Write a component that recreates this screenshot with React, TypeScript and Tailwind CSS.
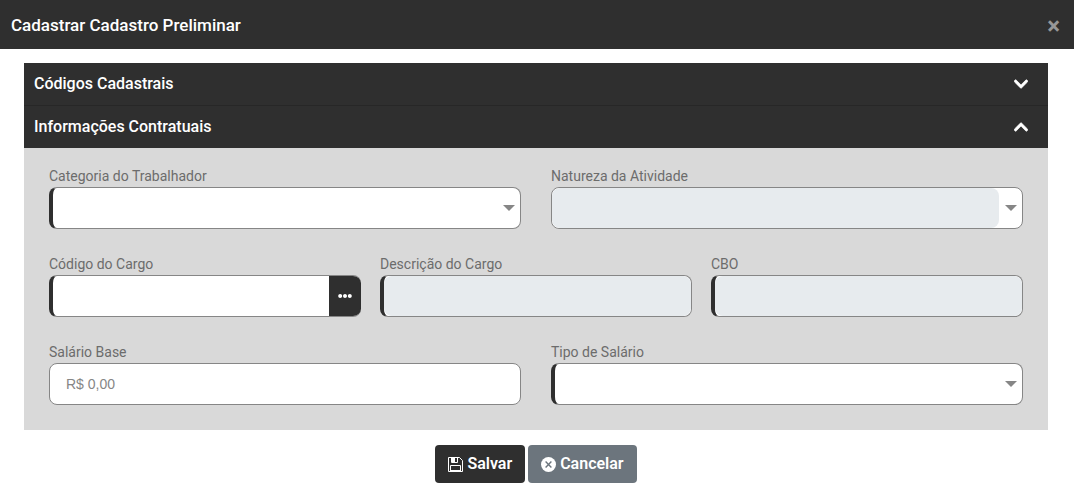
import React, { useState } from 'react';
import { clsx } from 'clsx';
import { FaChevronDown, FaChevronUp, FaEllipsisH } from 'react-icons/fa';

const SaveIcon = () => (
  <svg viewBox="0 0 15 15" className="h-[15px] w-[15px]" fill="none" stroke="currentColor" aria-hidden="true">
    <path d="M0.5 0.5h11l3 3v11h-14z" />
    <path d="M3.5 0.5v5h6v-5" />
    <path d="M3 0h4v5H3z" fill="currentColor" stroke="none" />
    <path d="M2.5 14v-5.5h10v5.5" />
    <path d="M3 13.5h9" />
  </svg>
);

const CancelIcon = () => (
  <svg viewBox="0 0 15 15" className="h-[15px] w-[15px]" aria-hidden="true">
    <circle cx="7.5" cy="7.5" r="7.5" fill="currentColor" />
    <path d="M4.6 4.6l5.8 5.8M10.4 4.6l-5.8 5.8" stroke="#6c757d" strokeWidth="1.4" />
  </svg>
);

type FieldProps = {
  id: string;
  label: string;
  required?: boolean;
  disabled?: boolean;
};

const boxClass = (required?: boolean) =>
  clsx(
    'relative flex h-[42px] overflow-hidden rounded-lg border border-[#868686] bg-white',
    required && 'border-l-4 border-l-[#2f2f2f]'
  );

const Label = ({ id, label }: { id: string; label: string }) => (
  <label htmlFor={id} className="block text-sm leading-[21px] text-[#6c6c6c]">
    {label}
  </label>
);

const SelectField = ({ id, label, required, disabled }: FieldProps) => (
  <div>
    <Label id={id} label={label} />
    <div className={clsx(boxClass(required), disabled && 'pr-[23px]')}>
      <select
        id={id}
        disabled={disabled}
        className="w-full appearance-none rounded-lg pl-4 pr-6 text-sm text-[#6c6c6c] outline-none disabled:bg-[#e7ebee] disabled:opacity-100"
      >
        <option value=""></option>
      </select>
      <svg viewBox="0 0 12 6" className="pointer-events-none absolute right-[5px] top-[17px] h-[6px] w-3 text-[#868686]" aria-hidden="true">
        <path d="M0 0h12L6 6z" fill="currentColor" />
      </svg>
    </div>
  </div>
);

const InputField = ({ id, label, required, disabled, placeholder, children }: FieldProps & { placeholder?: string; children?: React.ReactNode }) => (
  <div>
    <Label id={id} label={label} />
    <div className={clsx(boxClass(required), children && 'border-r-0')}>
      <input
        id={id}
        type="text"
        disabled={disabled}
        placeholder={placeholder}
        className="min-w-0 flex-1 rounded-lg px-4 font-['Liberation_Sans',sans-serif] text-sm text-[#6c6c6c] outline-none placeholder:text-[#868686] disabled:bg-[#e7ebee]"
      />
      {children}
    </div>
  </div>
);

const SectionHeader = ({ title, open, onClick }: { title: string; open: boolean; onClick: () => void }) => (
  <button
    type="button"
    aria-expanded={open}
    onClick={onClick}
    className="flex h-[42px] w-full items-center justify-between bg-[#2f2f2f] pl-[10px] pr-5 text-base font-medium text-white"
  >
    {title}
    {open ? <FaChevronUp className="h-4 w-[14px]" stroke="currentColor" strokeWidth="24" /> : <FaChevronDown className="h-4 w-[14px]" stroke="currentColor" strokeWidth="24" />}
  </button>
);

const App = () => {
  const [codesOpen, setCodesOpen] = useState(false);
  const [contractOpen, setContractOpen] = useState(true);

  return (
    <div className="bg-white font-['Roboto',sans-serif]">
      <header className="flex h-[49px] items-center justify-between bg-[#2f2f2f] pl-[11px] pr-[14px] pt-[2px] text-white">
        <h1 className="text-[17px] font-medium">Cadastrar Cadastro Preliminar</h1>
        <button type="button" aria-label="Fechar" className="text-2xl font-bold leading-6 text-[#979797]">
          ×
        </button>
      </header>

      <main className="pl-6 pr-[26px] pt-[14px]">
        <div className="border-b border-[#272727]">
          <SectionHeader title="Códigos Cadastrais" open={codesOpen} onClick={() => setCodesOpen(!codesOpen)} />
        </div>
        <SectionHeader title="Informações Contratuais" open={contractOpen} onClick={() => setContractOpen(!contractOpen)} />

        {contractOpen && (
          <div className="flex flex-col gap-[25px] bg-[#d9d9d9] px-[25px] pb-[25px] pt-[18px]">
            <div className="grid grid-cols-2 gap-[30px]">
              <SelectField id="categoria" label="Categoria do Trabalhador" required />
              <SelectField id="natureza" label="Natureza da Atividade" disabled />
            </div>
            <div className="grid grid-cols-3 gap-[19px]">
              <InputField id="codigo" label="Código do Cargo" required>
                <button
                  type="button"
                  aria-label="Buscar cargo"
                  className="-my-px flex w-8 items-center justify-center bg-[#2f2f2f] text-white"
                >
                  <FaEllipsisH className="h-[14px] w-[14px]" />
                </button>
              </InputField>
              <InputField id="descricao" label="Descrição do Cargo" required disabled />
              <InputField id="cbo" label="CBO" required disabled />
            </div>
            <div className="grid grid-cols-2 gap-[30px]">
              <InputField id="salario" label="Salário Base" placeholder="R$ 0,00" />
              <SelectField id="tipo" label="Tipo de Salário" required />
            </div>
          </div>
        )}
      </main>

      <footer className="flex justify-center gap-[3px] pb-[10px] pl-6 pr-[26px] pt-[15px]">
        <button type="button" className="flex h-[38px] items-center gap-1 rounded bg-[#2f2f2f] px-[13px] text-base font-semibold text-white">
          <SaveIcon />
          Salvar
        </button>
        <button type="button" className="flex h-[38px] items-center gap-1 rounded bg-[#6c757d] px-[13px] text-base font-semibold text-white">
          <CancelIcon />
          Cancelar
        </button>
      </footer>
    </div>
  );
};

export default App;
